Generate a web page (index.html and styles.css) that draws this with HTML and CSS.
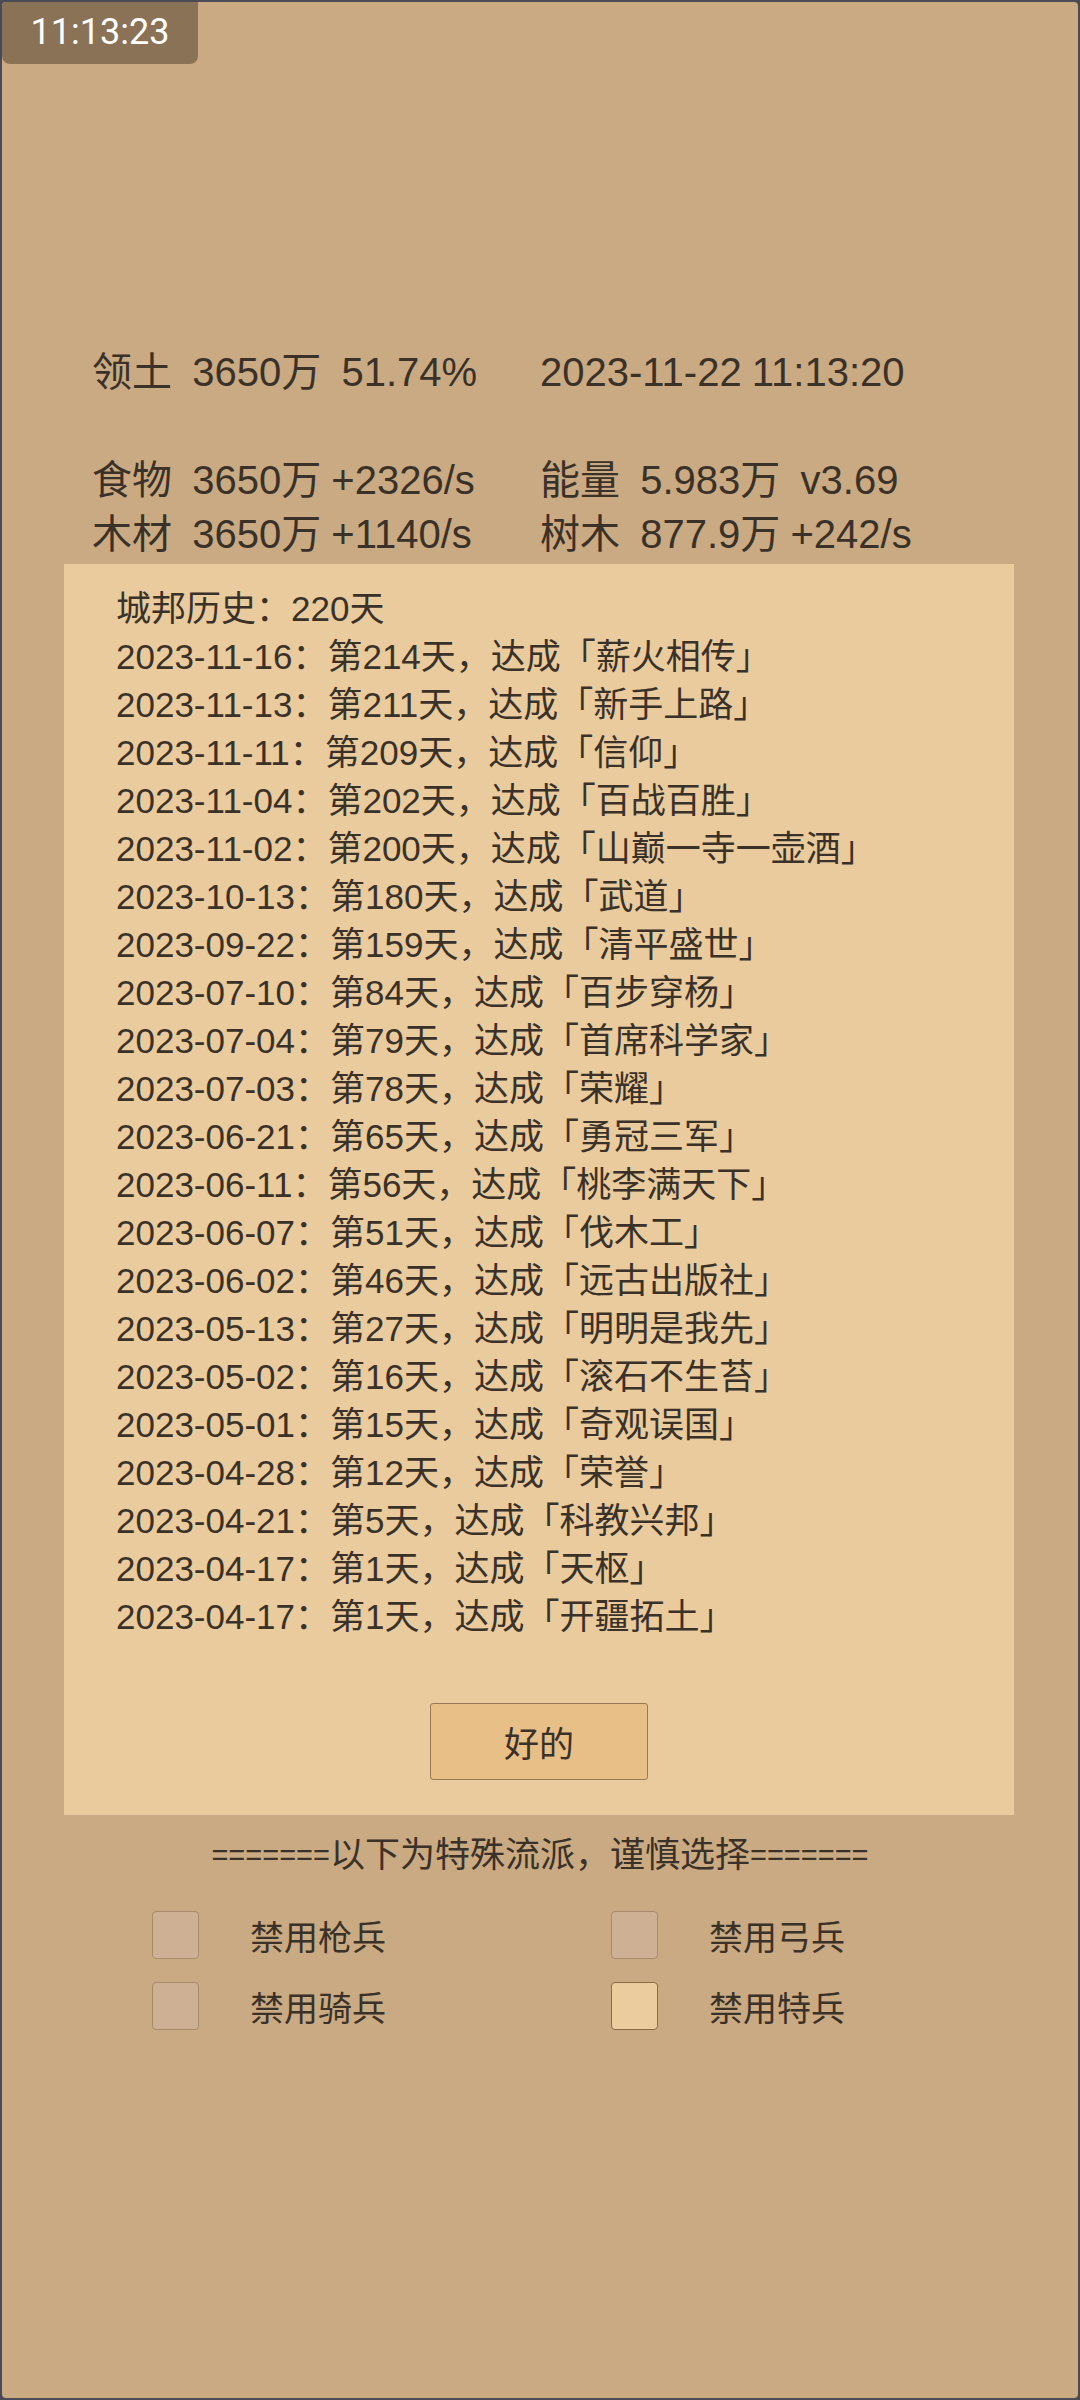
FILE: index.html
```html
<!DOCTYPE html>
<html lang="zh">
<head>
    <meta charset="UTF-8">
    <meta name="viewport" content="width=device-width, initial-scale=1.0">
    <title>城邦</title>
    <link rel="stylesheet" href="styles.css">
</head>
<body>
    <div class="screen">
        <div class="clock">11:13:23</div>

        <div class="stats">
            <div class="stat-row first">
                <span>领土  3650万  51.74%</span>
                <span>2023-11-22 11:13:20</span>
            </div>
            <div class="stat-row">
                <span>食物  3650万 +2326/s</span>
                <span>能量  5.983万  v3.69</span>
            </div>
            <div class="stat-row">
                <span>木材  3650万 +1140/s</span>
                <span>树木  877.9万 +242/s</span>
            </div>
        </div>

        <div class="panel">
            <div class="history">
                <div>城邦历史：220天</div>
                <div>2023-11-16：第214天，达成「薪火相传」</div>
                <div>2023-11-13：第211天，达成「新手上路」</div>
                <div>2023-11-11：第209天，达成「信仰」</div>
                <div>2023-11-04：第202天，达成「百战百胜」</div>
                <div>2023-11-02：第200天，达成「山巅一寺一壶酒」</div>
                <div>2023-10-13：第180天，达成「武道」</div>
                <div>2023-09-22：第159天，达成「清平盛世」</div>
                <div>2023-07-10：第84天，达成「百步穿杨」</div>
                <div>2023-07-04：第79天，达成「首席科学家」</div>
                <div>2023-07-03：第78天，达成「荣耀」</div>
                <div>2023-06-21：第65天，达成「勇冠三军」</div>
                <div>2023-06-11：第56天，达成「桃李满天下」</div>
                <div>2023-06-07：第51天，达成「伐木工」</div>
                <div>2023-06-02：第46天，达成「远古出版社」</div>
                <div>2023-05-13：第27天，达成「明明是我先」</div>
                <div>2023-05-02：第16天，达成「滚石不生苔」</div>
                <div>2023-05-01：第15天，达成「奇观误国」</div>
                <div>2023-04-28：第12天，达成「荣誉」</div>
                <div>2023-04-21：第5天，达成「科教兴邦」</div>
                <div>2023-04-17：第1天，达成「天枢」</div>
                <div>2023-04-17：第1天，达成「开疆拓土」</div>
            </div>
            <button class="ok">好的</button>
        </div>

        <div class="special">
            <p class="special-title"><span class="rule">=======</span>以下为特殊流派，谨慎选择<span class="rule">=======</span></p>
            <div class="options">
                <label class="option"><span class="box"></span>禁用枪兵</label>
                <label class="option"><span class="box"></span>禁用弓兵</label>
                <label class="option"><span class="box"></span>禁用骑兵</label>
                <label class="option"><span class="box checked"></span>禁用特兵</label>
            </div>
        </div>
    </div>
</body>
</html>
```

FILE: styles.css
```css
/* Warm parchment theme */
html {
    background: #4b4a57;
}

body {
    margin: 0;
    font-family: "Liberation Sans", "Noto Sans CJK SC", sans-serif;
    color: #3a3129;
}

.screen {
    position: relative;
    width: 1080px;
    height: 2400px;
    box-sizing: border-box;
    border: 2px solid #4b4a57;
    border-radius: 6px;
    background: #caaa82;
    overflow: hidden;
}

.clock {
    position: absolute;
    top: -2px;
    left: 0;
    width: 196px;
    height: 64px;
    background: #8a7257;
    border-radius: 0 0 8px 8px;
    color: #fff;
    font-family: Roboto, "Liberation Sans", sans-serif;
    font-size: 36px;
    line-height: 64px;
    text-align: center;
}

.stats {
    margin-top: 343px;
    padding-left: 90px;
    font-size: 40px;
    line-height: 54px;
}

.stat-row {
    display: grid;
    grid-template-columns: 448px 1fr;
    white-space: pre;
    word-spacing: -1px;
}

.stat-row.first {
    margin-bottom: 54px;
}

.panel {
    margin: 3px 0 0 62px;
    width: 950px;
    box-sizing: border-box;
    padding: 21px 0 35px 52px;
    background: #e9cb9e;
    display: flex;
    flex-direction: column;
}

.history {
    font-size: 35px;
    line-height: 48px;
}

.ok {
    align-self: center;
    margin: 62px 52px 0 0;
    width: 218px;
    height: 77px;
    background: #e8bf87;
    border: 1px solid #9a7a52;
    border-radius: 3px;
    font-family: "Liberation Sans", "Noto Sans CJK SC", sans-serif;
    font-size: 35px;
    color: #3a3129;
}

.special-title {
    margin: 16px 0 0;
    text-align: center;
    font-size: 35px;
    line-height: 48px;
}

.rule {
    font-size: 29px;
    vertical-align: 2px;
}

.options {
    display: grid;
    grid-template-columns: 459px 459px;
    row-gap: 23px;
    margin-top: 32px;
    padding-left: 150px;
}

.option {
    display: flex;
    align-items: center;
    gap: 51px;
    font-size: 34px;
    height: 48px;
}

.box {
    width: 47px;
    height: 48px;
    box-sizing: border-box;
    border: 1px solid #a98b6a;
    border-radius: 4px;
    background: #ceb195;
}

.box.checked {
    background: #ebcc9e;
    border-color: #8c6b47;
}
```
